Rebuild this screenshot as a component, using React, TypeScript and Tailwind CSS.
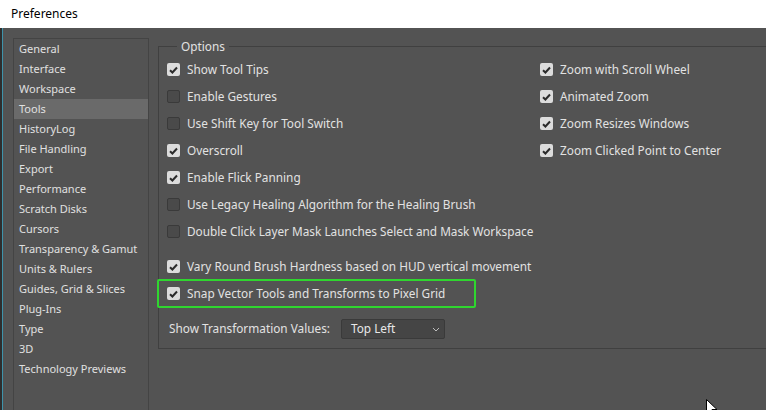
import React from "react";

const font = { fontFamily: '"Noto Sans", "DejaVu Sans", sans-serif' };

function Box({ checked }: { checked: boolean }) {
  return checked ? (
    <div className="w-[13px] h-[13px] rounded-[2px] bg-[#dcdcdc] flex items-center justify-center shrink-0">
      <svg width="9" height="8" viewBox="0 0 9 8">
        <path d="M1 4.2 L3.4 6.5 L8 1.5" stroke="#2b2b2b" strokeWidth="2" fill="none" />
      </svg>
    </div>
  ) : (
    <div className="w-[13px] h-[13px] rounded-[2px] bg-[#4a4a4a] border border-[#3a3a3a] shrink-0" />
  );
}

function Row({ checked, label }: { checked: boolean; label: string }) {
  return (
    <div className="h-[27px] flex items-center gap-[7px]">
      <Box checked={checked} />
      <span className="text-[11.8px] text-[#e2e2e2] whitespace-nowrap">{label}</span>
    </div>
  );
}

const items = [
  "General",
  "Interface",
  "Workspace",
  "Tools",
  "HistoryLog",
  "File Handling",
  "Export",
  "Performance",
  "Scratch Disks",
  "Cursors",
  "Transparency & Gamut",
  "Units & Rulers",
  "Guides, Grid & Slices",
  "Plug-Ins",
  "Type",
  "3D",
  "Technology Previews",
];

export default function App() {
  return (
    <div className="w-[766px] h-[410px] overflow-hidden flex flex-col bg-[#535353] relative" style={font}>
      <div className="h-[28px] bg-white flex items-center pl-[11px] shrink-0">
        <span className="text-[12px] text-black">Preferences</span>
      </div>
      <div className="flex flex-1 min-h-0">
        <div className="w-[2px] bg-[#2e2e2e] shrink-0" />
        <div className="w-[1px] bg-[#3e93aa] shrink-0" />
        <div className="flex flex-1 pl-[10px] pt-[10px] min-w-0">
          <div className="w-[136px] h-[400px] border border-[#444444] shrink-0">
            {items.map((it) => (
              <div
                key={it}
                className={`h-[20px] flex items-center pl-[5px] text-[11px] text-[#e0e0e0] whitespace-nowrap ${
                  it === "Tools" ? "bg-[#6a6a6a]" : ""
                }`}
              >
                {it}
              </div>
            ))}
          </div>
          <fieldset className="ml-[9px] w-[700px] h-[311px] border border-[#404040] border-r-0 shrink-0 pl-[8px] relative">
            <legend className="ml-[10px] px-[4px] text-[11.8px] text-[#e2e2e2] leading-[16px]">Options</legend>
            <div className="pt-[2px] flex">
              <div className="w-[373px] shrink-0">
                <Row checked label="Show Tool Tips" />
                <Row checked={false} label="Enable Gestures" />
                <Row checked={false} label="Use Shift Key for Tool Switch" />
                <Row checked label="Overscroll" />
                <Row checked label="Enable Flick Panning" />
                <Row checked={false} label="Use Legacy Healing Algorithm for the Healing Brush" />
                <Row checked={false} label="Double Click Layer Mask Launches Select and Mask Workspace" />
              </div>
              <div>
                <Row checked label="Zoom with Scroll Wheel" />
                <Row checked label="Animated Zoom" />
                <Row checked label="Zoom Resizes Windows" />
                <Row checked label="Zoom Clicked Point to Center" />
              </div>
            </div>
            <div className="mt-[8px]">
              <Row checked label="Vary Round Brush Hardness based on HUD vertical movement" />
              <div className="relative">
                <Row checked label="Snap Vector Tools and Transforms to Pixel Grid" />
                <div className="absolute left-[-10px] top-[-1px] w-[319px] h-[29px] border-2 border-[#2fd62f] rounded-[2px]" />
              </div>
            </div>
            <div className="mt-[12px] flex items-center pl-[2px]">
              <span className="text-[11.8px] text-[#e2e2e2] whitespace-nowrap">Show Transformation Values:</span>
              <div className="ml-[11px] w-[104px] h-[20px] bg-[#454545] border border-[#3a3a3a] rounded-[2px] flex items-center justify-between pl-[9px] pr-[4px]">
                <span className="text-[11.8px] text-[#e8e8e8]">Top Left</span>
                <svg width="8" height="5" viewBox="0 0 8 5">
                  <path d="M1 1 L4 4 L7 1" stroke="#bdbdbd" strokeWidth="1" fill="none" />
                </svg>
              </div>
            </div>
          </fieldset>
        </div>
      </div>
      <svg className="absolute left-[706px] top-[399px]" width="12" height="18" viewBox="0 0 12 18">
        <path d="M0.5 0.5 L0.5 15 L4 11.5 L6.5 17 L8.5 16 L6 10.5 L11 10.5 Z" fill="white" stroke="black" strokeWidth="1" />
      </svg>
    </div>
  );
}
